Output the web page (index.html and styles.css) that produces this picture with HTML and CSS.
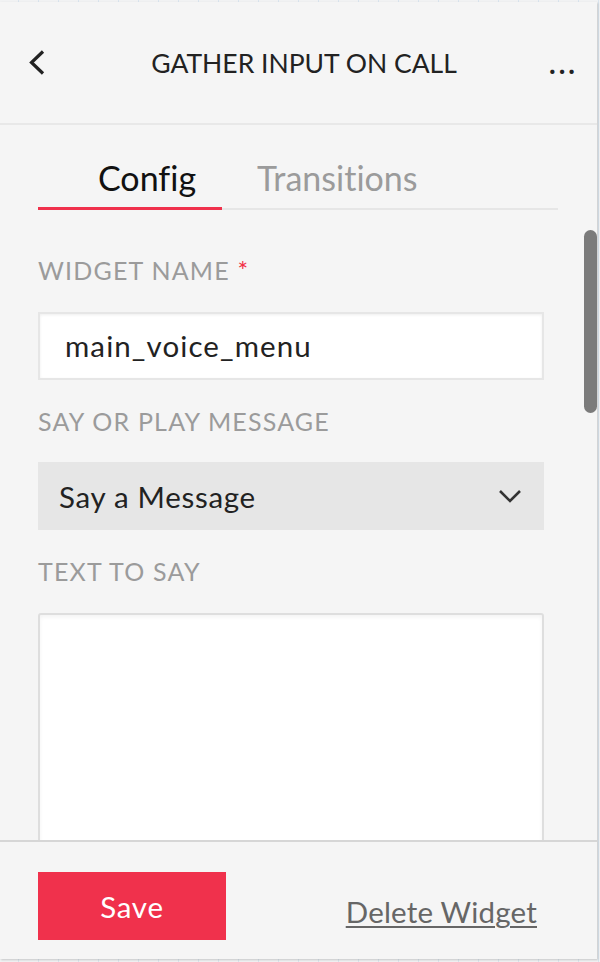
FILE: index.html
```html
<!DOCTYPE html>
<html lang="en">
<head>
    <meta charset="UTF-8">
    <meta name="viewport" content="width=device-width, initial-scale=1.0">
    <title>Gather Input On Call</title>
    <link rel="stylesheet" href="styles.css">
</head>
<body>
    <div class="panel">
        <div class="panel-header">
            <button class="back-btn" aria-label="Back">
                <svg width="16" height="25" viewBox="0 0 16 25">
                    <polyline points="14,1.5 2.5,12.5 14,23.5" fill="none" stroke="#222" stroke-width="3.2"/>
                </svg>
            </button>
            <h1 class="panel-title">GATHER INPUT ON CALL</h1>
            <span class="more">...</span>
        </div>

        <div class="panel-body">
            <div class="tabs">
                <div class="tab active">Config</div>
                <div class="tab">Transitions</div>
            </div>

            <div class="field first">
                <label class="field-label" for="widgetName">Widget name <span class="required">*</span></label>
                <input id="widgetName" class="text-input" type="text" value="main_voice_menu">
            </div>

            <div class="field">
                <label class="field-label" for="sayOrPlay">Say or play message</label>
                <div class="select-wrap">
                    <select id="sayOrPlay" class="select-input">
                        <option>Say a Message</option>
                        <option>Play a Message</option>
                    </select>
                    <svg class="select-arrow" width="24" height="15" viewBox="0 0 24 15">
                        <polyline points="2,2 12,12 22,2" fill="none" stroke="#333" stroke-width="2.6"/>
                    </svg>
                </div>
            </div>

            <div class="field">
                <label class="field-label" for="textToSay">Text to say</label>
                <textarea id="textToSay" class="text-area"></textarea>
            </div>
        </div>

        <div class="panel-footer">
            <button class="btn-save">Save</button>
            <a href="#" class="delete-link">Delete Widget</a>
        </div>

        <!-- overlay scrollbar -->
        <div class="scrollbar"></div>
    </div>
</body>
</html>
```

FILE: styles.css
```css
* {
    box-sizing: border-box;
}
body {
    margin: 0;
    height: 962px;
    overflow: hidden;
    font-family: 'Lato', 'Open Sans', sans-serif;
    font-variant-ligatures: none;
    background-color: #f1f2f3;
    background-image: repeating-linear-gradient(90deg, transparent 0, transparent 18px, #d9e4ee 18px, #d9e4ee 19px, transparent 19px, transparent 20px);
}
.panel {
    position: relative;
    width: 597px;
    height: 957px;
    margin-top: 2px;
    background-color: #f5f5f5;
    box-shadow: 1px 1px 2px rgba(0,0,0,0.18);
    display: flex;
    flex-direction: column;
    overflow: hidden;
}
.panel-header {
    flex: none;
    height: 123px;
    display: flex;
    align-items: center;
    padding: 0 19px 0 29px;
    border-bottom: 2px solid #e8e8e8;
}
.back-btn {
    width: 30px;
    padding: 0;
    border: none;
    background: none;
    display: flex;
    align-items: center;
}
.panel-title {
    flex: 1;
    margin: 0;
    text-align: center;
    font-size: 26.5px;
    font-weight: 400;
    line-height: 28px;
    color: #222;
}
.more {
    font-size: 28px;
    line-height: 28px;
    font-weight: 700;
    letter-spacing: 3px;
    color: #222;
}
.panel-body {
    flex: 1;
    overflow: hidden;
    padding: 33px 53px 0 38px;
}
.tabs {
    display: flex;
    margin-right: -14px;
    border-bottom: 2px solid #e6e6e6;
}
.tab {
    font-size: 34px;
    line-height: 40px;
    padding: 0 0 9px 35px;
    color: #9b9b9b;
}
.tab.active {
    width: 184px;
    padding-left: 60px;
    color: #111;
    border-bottom: 3px solid #f0314c;
    margin-bottom: -2px;
}
.field {
    margin-top: 26px;
}
.field.first {
    margin-top: 45px;
}
.field-label {
    display: block;
    font-size: 25px;
    line-height: 30px;
    letter-spacing: 1.2px;
    text-transform: uppercase;
    color: #9b9b9b;
    margin-bottom: 26.5px;
}
.required {
    color: #f22f46;
}
.text-input {
    display: block;
    width: 100%;
    height: 68px;
    padding: 0 23px 0 25px;
    border: 2px solid #e6e6e6;
    background-color: #fff;
    box-shadow: inset 0 1px 3px rgba(0,0,0,0.07);
    font-family: inherit;
    font-size: 29.5px;
    letter-spacing: 1.1px;
    color: #222;
    outline: none;
}
.select-wrap {
    position: relative;
}
.select-input {
    display: block;
    width: 100%;
    height: 68px;
    padding: 0 21px;
    border: none;
    border-radius: 0;
    appearance: none;
    background-color: #e6e6e6;
    font-family: inherit;
    font-size: 29.5px;
    letter-spacing: 0.7px;
    color: #222;
}
.select-arrow {
    position: absolute;
    right: 22px;
    top: 27px;
}
.text-area {
    display: block;
    width: 100%;
    height: 320px;
    border: 2px solid #dedede;
    border-radius: 3px;
    background-color: #fff;
    box-shadow: inset 0 2px 4px rgba(0,0,0,0.05);
    resize: none;
}
.panel-footer {
    flex: none;
    height: 119px;
    display: flex;
    align-items: flex-start;
    justify-content: space-between;
    padding: 30px 60px 0 38px;
    border-top: 2px solid #d6d6d6;
}
.btn-save {
    width: 188px;
    height: 68px;
    border: none;
    background-color: #f0314c;
    color: #fff;
    font-family: inherit;
    font-size: 29.5px;
    letter-spacing: 0.8px;
}
.delete-link {
    margin-top: 26px;
    font-size: 29.5px;
    line-height: 28px;
    letter-spacing: 0.2px;
    color: #666;
    text-decoration: underline;
    text-decoration-thickness: 2px;
    text-underline-offset: 3px;
}
.scrollbar {
    position: absolute;
    left: 584px;
    top: 228px;
    width: 13px;
    height: 183px;
    border-radius: 7px;
    background-color: #7b7b7b;
}
```
